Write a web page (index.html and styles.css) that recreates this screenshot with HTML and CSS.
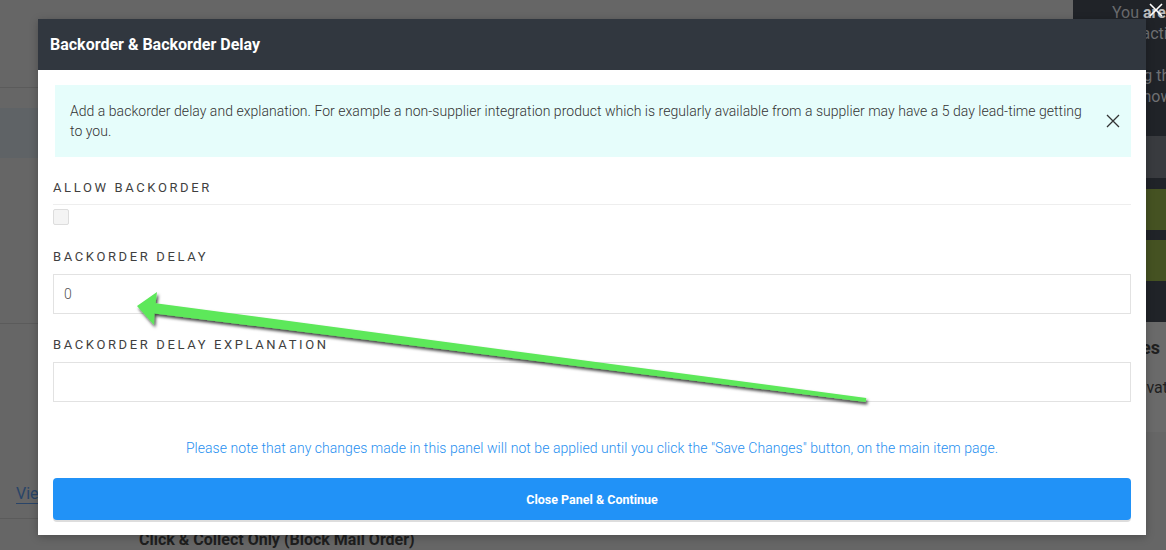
FILE: index.html
```html
<!DOCTYPE html>
<html lang="en" class="html">
<head>
    <meta charset="UTF-8">
    <meta name="viewport" content="width=device-width, initial-scale=1.0">
    <title>Backorder &amp; Backorder Delay</title>
    <link rel="stylesheet" href="styles.css">
</head>
<body class="body">
    <!-- item page, dimmed behind the panel -->
    <div class="page">
        <div class="page__main">
            <div class="page__top"></div>
            <div class="page__band"></div>
            <div class="page__block"></div>
            <div class="page__links">
                <a class="page__link" href="#">View</a>
            </div>
            <div class="page__row">Click &amp; Collect Only (Block Mail Order)</div>
        </div>
        <aside class="side">
            <div class="side__dark">
                <p class="side__text"><span class="side__muted">You</span> <b>are</b></p>
                <p class="side__text">in inactive</p>
                <p class="side__text">&nbsp;</p>
                <p class="side__text">Using the</p>
                <p class="side__text">See how</p>
                <div class="side__grey"></div>
                <div class="side__olive"></div>
                <div class="side__olive"></div>
            </div>
            <div class="side__light">
                <p class="side__title">Categories</p>
                <p class="side__sub">Private</p>
            </div>
            <span class="side__close">
                <svg width="14" height="14" viewBox="0 0 14 14"><path d="M1 1L13 13M13 1L1 13" stroke="#fff" stroke-width="1.6"/></svg>
            </span>
        </aside>
    </div>

    <div class="modal">
        <div class="modal__header">
            <h2 class="modal__title">Backorder &amp; Backorder Delay</h2>
        </div>
        <form class="modal__body" onsubmit="return false;">
            <div class="alert">
                <p class="alert__text">Add a backorder delay and explanation. For example a non-supplier integration product which is regularly available from a supplier may have a 5 day lead-time getting to you.</p>
                <button class="alert__close" type="button">
                    <svg width="14" height="14" viewBox="0 0 14 14"><path d="M1 1L13 13M13 1L1 13" stroke="#333" stroke-width="1.3"/></svg>
                </button>
            </div>

            <label class="form__label form__label_ruled">Allow Backorder</label>
            <span class="form__check"></span>

            <label class="form__label">Backorder Delay</label>
            <input class="form__input" type="text" value="0">

            <label class="form__label">Backorder Delay Explanation</label>
            <input class="form__input" type="text" value="">

            <p class="form__note">Please note that any changes made in this panel will not be applied until you click the "Save Changes" button, on the main item page.</p>
            <button class="form__submit" type="button">Close Panel &amp; Continue</button>
        </form>
    </div>

    <!-- pointer drawn over the panel -->
    <svg class="pointer" width="1166" height="550" viewBox="0 0 1166 550">
        <defs>
            <filter id="pointerShadow" x="-5%" y="-20%" width="110%" height="140%">
                <feDropShadow dx="1.5" dy="2.5" stdDeviation="1.6" flood-color="#000" flood-opacity="0.75"/>
            </filter>
        </defs>
        <polygon filter="url(#pointerShadow)" fill="#5de85a"
                 points="137,306 157,292 155.6,303.2 866.3,398 865.7,402 154.4,313.4 154,325"/>
    </svg>
</body>
</html>
```

FILE: styles.css
```css
* {
    margin: 0;
    padding: 0;
    box-sizing: border-box;
}

.html,
.body {
    width: 100%;
    height: 100%;
}

.body {
    overflow: hidden;
    background-color: #666;
    font-family: Roboto, "Liberation Sans", sans-serif;
    color: #444;
}

/* dimmed page */

.page {
    display: flex;
    height: 550px;
}

.page__main {
    flex: 1;
    display: flex;
    flex-direction: column;
}

.page__top {
    height: 88px;
    border-bottom: 1px solid #5b5b5b;
}

.page__band {
    margin-top: 20px;
    height: 50px;
    background-color: #5f6366;
}

.page__block {
    height: 166px;
    border-bottom: 1px solid #5b5b5b;
}

.page__links {
    height: 195px;
    padding: 160px 0 0 16px;
    border-bottom: 1px solid #5b5b5b;
}

.page__link {
    display: inline-block;
    font-size: 16px;
    line-height: 18px;
    color: #294468;
    text-decoration: none;
    border-bottom: 1px solid #294468;
}

.page__row {
    padding: 11px 0 0 139px;
    font-size: 16px;
    font-weight: 700;
    line-height: 20px;
    color: #1e1e1e;
}

.side {
    position: relative;
    width: 93px;
    display: flex;
    flex-direction: column;
}

.side__dark {
    height: 322px;
    background-color: #202328;
    padding-top: 2px;
}

.side__text {
    padding-left: 39px;
    font-size: 16px;
    line-height: 21px;
    color: #6f7073;
    white-space: nowrap;
    overflow: hidden;
}

.side__text b {
    color: #b9babb;
}

.side__muted {
    color: #6a6b6e;
}

.side__grey {
    margin-top: 29px;
    height: 42px;
    background-color: #393b3f;
}

.side__olive {
    margin-top: 11px;
    height: 41px;
    background-color: #455222;
}

.side__olive + .side__olive {
    margin-top: 10px;
}

.side__light {
    height: 110px;
    background-color: #6a6a6a;
    padding-top: 15px;
    white-space: nowrap;
    overflow: hidden;
}

.side__title {
    display: flex;
    justify-content: flex-end;
    padding-right: 6px;
    font-size: 18px;
    font-weight: 700;
    line-height: 22px;
    color: #1f1f1f;
}

.side__sub {
    margin-top: 19px;
    padding-left: 54px;
    font-size: 16px;
    line-height: 20px;
    color: #1f1f1f;
}

.side__close {
    position: absolute;
    top: 2px;
    right: 3px;
}

/* panel */

.modal {
    position: absolute;
    left: 38px;
    top: 19px;
    width: 1108px;
    height: 516px;
    background-color: #fff;
    box-shadow: 0 2px 8px rgba(0, 0, 0, 0.25);
}

.modal__header {
    height: 51px;
    padding: 0 12px;
    display: flex;
    align-items: center;
    background-color: #31373f;
}

.modal__title {
    font-size: 16px;
    font-weight: 700;
    color: #fff;
}

.modal__body {
    display: flex;
    flex-direction: column;
    padding: 15px 15px 0;
}

.alert {
    margin-left: 2px;
    height: 72px;
    display: flex;
    align-items: center;
    padding: 0 11px 0 15px;
    background-color: #e6fdfb;
}

.alert__text {
    flex: 1;
    font-size: 14px;
    font-weight: 300;
    line-height: 20px;
    letter-spacing: 0.03px;
    color: #333;
}

.alert__close {
    margin-left: 14px;
    border: none;
    background: none;
    display: flex;
}

.form__label {
    margin-top: 21px;
    font-size: 13px;
    line-height: 20px;
    letter-spacing: 2.62px;
    text-transform: uppercase;
    color: #3f3f3f;
}

.form__label_ruled {
    padding-bottom: 6px;
    border-bottom: 1px solid #eee;
}

.form__check {
    margin-top: 4px;
    width: 16px;
    height: 16px;
    border: 1px solid #ddd;
    border-radius: 2px;
    background-color: #f4f4f4;
}

.form__check + .form__label {
    margin-top: 22px;
}

.form__input {
    margin-top: 7px;
    height: 40px;
    padding: 0 10px;
    border: 1px solid #e2e2e2;
    font-family: inherit;
    font-size: 14px;
    font-weight: 300;
    color: #555;
    outline: none;
}

.form__input + .form__label {
    margin-top: 21px;
}

.form__note {
    margin-top: 36px;
    font-size: 14px;
    font-weight: 300;
    line-height: 20px;
    letter-spacing: 0.05px;
    text-align: center;
    color: #1f8ff0;
}

.form__submit {
    margin-top: 20px;
    height: 42px;
    border: none;
    border-radius: 4px;
    background-color: #2192f7;
    box-shadow: 0 2px 0 #ddd;
    font-family: inherit;
    font-size: 12.5px;
    font-weight: 700;
    color: #fff;
}

.pointer {
    position: absolute;
    left: 0;
    top: 0;
    pointer-events: none;
}
```
